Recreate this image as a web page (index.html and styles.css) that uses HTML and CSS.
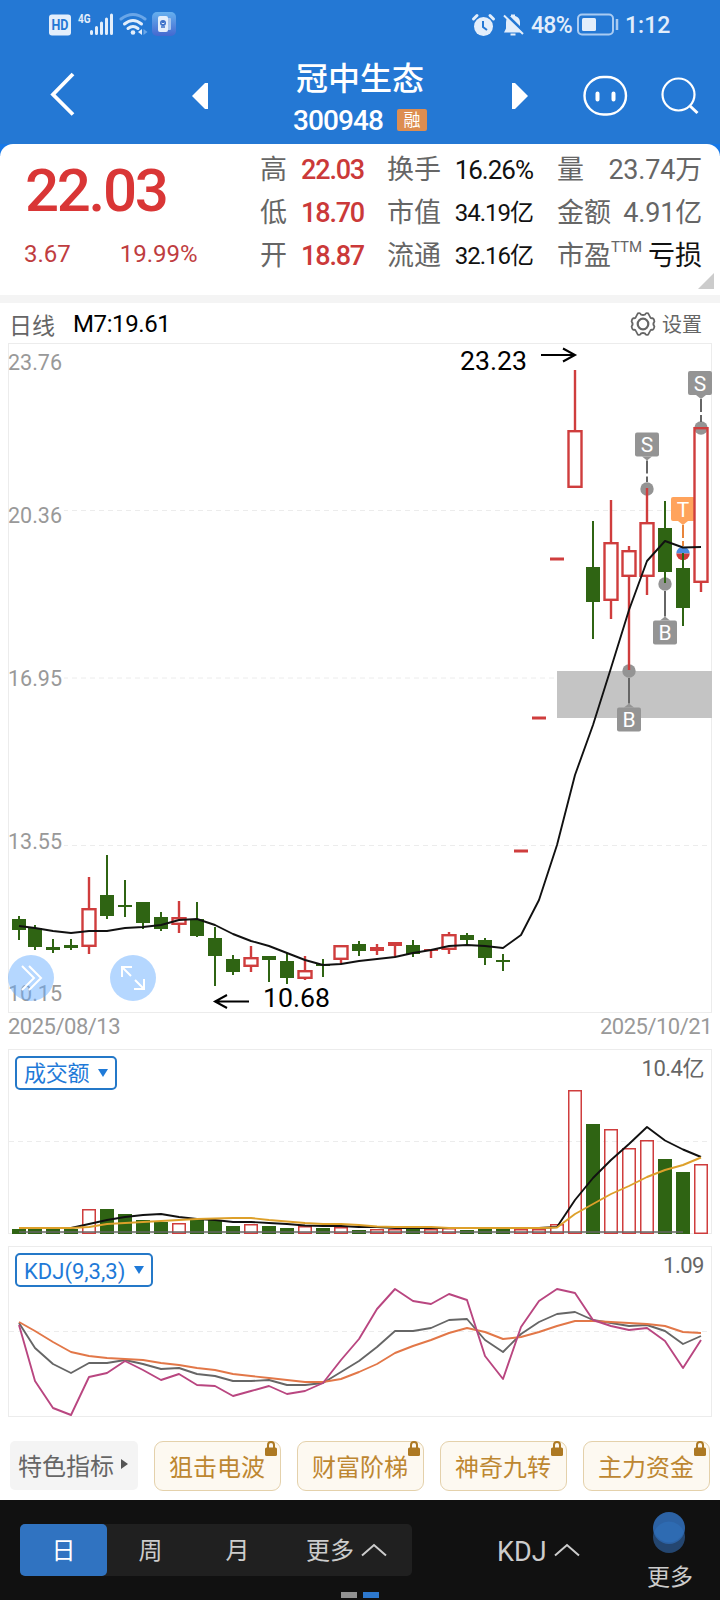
FILE: index.html
```html
<!DOCTYPE html>
<html lang="zh-CN">
<head>
  <meta charset="UTF-8" />
  <meta name="viewport" content="width=device-width, initial-scale=1.0" />
  <title>冠中生态 300948</title>
  <link rel="stylesheet" href="styles.css">
</head>
<body>
  <header class="top">
    <div class="status">
      <svg class="status-left" width="130" height="26" viewBox="48 11 130 26">
        <rect x="49" y="14.500" width="22" height="21" rx="3" fill="#e3eefb" />
        <text x="51.5" y="30" class="hd" textLength="17" lengthAdjust="spacingAndGlyphs">HD</text>
        <text x="78" y="22.500" class="net" textLength="12.500" lengthAdjust="spacingAndGlyphs">4G</text>
        <path d="M91.5 31.5v2M96.5 27.500v6M101.500 23v10.500M106.500 19v14.500M111.500 15v18.500" class="bars" />
        <path d="M121 19Q133 10 145 19" stroke="#6aa6e8" class="wifi" />
        <path d="M124.500 24Q133 17 141.500 24M128 28.500Q133 24.500 138 28.500" stroke="#e3eefb" class="wifi" />
        <circle cx="133" cy="32.500" r="2.300" fill="#e3eefb" />
        <path d="M142 29v6l-4-3z" fill="#e3eefb" />
        <path d="M143.500 29v6l4-3z" fill="#6aa6e8" />
        <defs>
          <linearGradient id="app" x2="0" y2="1"><stop stop-color="#66b0ef" /><stop offset="1" stop-color="#4468cf" /></linearGradient>
        </defs>
        <rect x="152" y="12" width="24" height="24" rx="5" fill="url(#app)" />
        <rect x="162" y="18" width="9" height="12" rx="1" fill="#a5c4ee" />
        <rect x="158" y="16" width="10" height="16" rx="2" fill="#e3eefb" />
        <circle cx="163" cy="23" r="3" fill="#3c70c8" />
        <path d="M161 27h4" stroke="#3c70c8" stroke-width="1.500" />
        <path d="M161.500 23q1.500 1.500 3 0" stroke="#e3eefb" fill="none" />
      </svg>
      <div class="status-right">
        <svg width="54" height="26" viewBox="471 11 54 26">
          <circle cx="483.500" cy="25.500" r="9.500" fill="#e3eefb" />
          <path d="M483 20v6l4 3" stroke="#2478d4" stroke-width="2" fill="none" />
          <path d="M473.500 18l3.500-3.500M493.500 18l-3.500-3.500" stroke="#e3eefb" stroke-width="3" stroke-linecap="round" />
          <path d="M504 31.500h18l-2-4v-6c0-4-2.500-6-5-6.500v-1.500h-4v1.500c-3 .5-5 3-5 6.500v6z" fill="#e3eefb" />
          <path d="M505.500 13l19 18.500" stroke="#2478d4" stroke-width="3" />
          <path d="M504 14.500l19 18.500" stroke="#e3eefb" stroke-width="2" />
          <path d="M510.500 33.500h5" stroke="#e3eefb" stroke-width="2" />
        </svg>
        <span class="pct">48%</span>
        <svg width="42" height="24" viewBox="577 13 42 24">
          <rect x="578" y="14.500" width="35" height="20" rx="4" fill="none" stroke="#a9cbf2" stroke-width="2" />
          <rect x="582" y="18" width="14" height="13" rx="1.500" fill="#e3eefb" />
          <path d="M617 19v11" stroke="#a9cbf2" stroke-width="2.500" />
        </svg>
        <span class="time">1:12</span>
      </div>
    </div>
    <div class="nav">
      <svg class="back" width="30" height="48" viewBox="0 0 30 48"><path d="M26 4L6 24.500l20 20" fill="none" stroke="#fff" stroke-width="3.800" /></svg>
      <svg class="prev" width="16" height="26" viewBox="0 0 16 26"><path d="M16 0v26h-3L0 13 13 0z" fill="#fff" /></svg>
      <div class="stock">
        <h1>冠中生态</h1>
        <p><span class="code">300948</span><span class="badge">融</span></p>
      </div>
      <svg class="next" width="16" height="26" viewBox="0 0 16 26"><path d="M0 0v26h3l13-13L3 0z" fill="#fff" /></svg>
      <svg class="robot" width="46" height="42" viewBox="0 0 46 42" fill="none" stroke="#fff">
        <rect x="1.500" y="2" width="41.500" height="37.500" rx="19" stroke-width="2.400" />
        <path d="M14.500 18.500v6M30.500 18.500v6" stroke-width="4" stroke-linecap="round" />
      </svg>
      <svg class="search" width="38" height="38" viewBox="0 0 38 38" fill="none" stroke="#fff" stroke-width="2.200">
        <circle cx="17.500" cy="17.500" r="16" /><path d="M28.500 28.500l8 7.500" stroke-width="3" />
      </svg>
    </div>
  </header>

  <section class="quote">
    <div class="price">
      <strong>22.03</strong>
      <div class="change"><span>3.67</span><span>19.99%</span></div>
    </div>
    <div class="stats">
      <label>高</label><b class="up">22.03</b>
      <label>换手</label><b class="turn">16.26%</b>
      <label>量</label><b class="vol">23.74万</b>
      <label>低</label><b class="up">18.70</b>
      <label>市值</label><b class="cap">34.19亿</b>
      <label>金额</label><b class="vol">4.91亿</b>
      <label>开</label><b class="up">18.87</b>
      <label>流通</label><b class="cap">32.16亿</b>
      <label>市盈<sup>TTM</sup></label><b class="loss">亏损</b>
    </div>
    <i class="corner"></i>
  </section>

  <section class="charts">
    <div class="chart-head">
      <span class="period">日线</span>
      <span class="ma">M7:19.61</span>
      <svg class="gear" width="26" height="26" viewBox="-13 -13 26 26" fill="none" stroke="#666" stroke-width="1.800">
        <path d="M-5.200-10.600Q-2.500-11.500-2.200-9.500Q0-8.500 2.200-9.500Q2.500-11.500 5.200-10.600L7.200-6.800Q7.500-5.500 9.500-5.800Q11-5.500 11.400-2.500Q9.300 0 11.400 2.500Q11 5.500 9.500 5.800Q7.500 5.500 7.200 6.800L5.200 10.600Q2.500 11.500 2.200 9.500Q0 8.500-2.200 9.500Q-2.500 11.500-5.200 10.600L-7.200 6.800Q-7.500 5.500-9.500 5.800Q-11 5.500-11.400 2.500Q-9.300 0-11.400-2.500Q-11-5.500-9.500-5.800Q-7.500-5.500-7.200-6.800Z" />
        <circle r="5.300" stroke-width="2.200" />
      </svg>
      <span class="setting">设置</span>
    </div>
    <div class="panel">
      <svg id="kline" width="720" height="672" viewBox="0 342 720 672"></svg>
      <div class="round fold">
        <svg width="46" height="46" viewBox="0 0 46 46"><path d="M14 11l12 12-12 12M21 11l12 12-12 12" /></svg>
      </div>
      <div class="round expand">
        <svg width="46" height="46" viewBox="0 0 46 46"><path d="M12 22V12h10M12 12l9 9M34 24v10H24M34 34l-9-9" /></svg>
      </div>
    </div>
    <div class="dates"><span>2025/08/13</span><span>2025/10/21</span></div>
    <div class="panel amount">
      <svg id="volume" width="720" height="187" viewBox="0 1048 720 187"></svg>
      <div class="tag cn">成交额<i></i></div>
      <span class="max">10.4亿</span>
    </div>
    <div class="panel kdj">
      <svg id="kdj" width="720" height="173" viewBox="0 1245 720 173"></svg>
      <div class="tag">KDJ(9,3,3)<i></i></div>
      <span class="max">1.09</span>
    </div>
  </section>

  <div class="chips">
    <div class="chip all">特色指标<i></i></div>
    <div class="chip">狙击电波<svg class="lock" width="12" height="15" viewBox="0 0 12 15"><path d="M3 7V4a3 3 0 0 1 6 0v3" /><rect y="6.500" width="12" height="8.500" rx="1.500" /></svg></div>
    <div class="chip">财富阶梯<svg class="lock" width="12" height="15" viewBox="0 0 12 15"><path d="M3 7V4a3 3 0 0 1 6 0v3" /><rect y="6.500" width="12" height="8.500" rx="1.500" /></svg></div>
    <div class="chip">神奇九转<svg class="lock" width="12" height="15" viewBox="0 0 12 15"><path d="M3 7V4a3 3 0 0 1 6 0v3" /><rect y="6.500" width="12" height="8.500" rx="1.500" /></svg></div>
    <div class="chip">主力资金<svg class="lock" width="12" height="15" viewBox="0 0 12 15"><path d="M3 7V4a3 3 0 0 1 6 0v3" /><rect y="6.500" width="12" height="8.500" rx="1.500" /></svg></div>
  </div>

  <footer class="bottom">
    <div class="tabs">
      <span class="tab on">日</span>
      <span class="tab">周</span>
      <span class="tab">月</span>
      <span class="tab wide">更多<svg width="26" height="14" viewBox="0 0 26 14"><path d="M1 12.500L13 2l12 10.500" /></svg></span>
    </div>
    <div class="indicator">KDJ<svg width="26" height="14" viewBox="0 0 26 14"><path d="M1 12.500L13 2l12 10.500" /></svg></div>
    <div class="more">
      <svg width="34" height="43" viewBox="0 0 34 43">
        <circle cx="17" cy="26" r="16" fill="#244670" />
        <circle cx="17" cy="17" r="16" fill="#2c62a4" />
        <path d="M2 21a16 16 0 0 1 30 0a16 16 0 0 1-30 0z" fill="#2e6bb2" />
      </svg>
      <span>更多</span>
    </div>
    <div class="pager"><i></i><i class="on"></i></div>
  </footer>

  <script src="chart.js"></script>
</body>
</html>
```

FILE: styles.css
```css
* {
  box-sizing: border-box;
}
body {
  margin: 0;
  width: 720px;
  height: 1600px;
  overflow: hidden;
  background: #fff;
  font-family: Roboto, "Noto Sans CJK SC", sans-serif;
}
svg {
  display: block;
  flex: none;
}
h1, p {
  margin: 0;
}

/* header */
.top {
  height: 144px;
  background: #2478d4;
  color: #fff;
}
.status {
  height: 48px;
  padding: 11px 50px 0 48px;
  display: flex;
  justify-content: space-between;
}
.status-right {
  display: flex;
  align-items: center;
  height: 28px;
  color: #e3eefb;
  font-size: 23px;
  font-weight: 500;
}
.pct {
  width: 46px;
  margin-left: 6px;
  letter-spacing: -0.700px;
}
.time {
  margin-left: 6px;
  width: 45px;
  white-space: nowrap;
}
.hd {
  font: bold 14px Roboto;
  fill: #2478d4;
}
.net {
  font: bold 13px Roboto;
  fill: #e3eefb;
}
.bars {
  stroke: #e3eefb;
  stroke-width: 3;
  stroke-linecap: round;
}
.wifi {
  fill: none;
  stroke-width: 3;
  stroke-linecap: round;
}
.nav {
  display: flex;
  height: 96px;
}
.back {
  margin: 22px 0 0 47px;
}
.prev {
  margin: 35px 0 0 115px;
}
.stock {
  margin-left: 72px;
  width: 160px;
}
.stock h1 {
  margin-left: 16px;
  font-size: 32px;
  line-height: 36px;
  margin-top: 13px;
  font-weight: 500;
  white-space: nowrap;
}
.stock p {
  display: flex;
  align-items: center;
  margin: 9px 0 0 13px;
  height: 28px;
}
.code {
  font-size: 28px;
  font-weight: 500;
  width: 104px;
  letter-spacing: -0.900px;
}
.badge {
  width: 30px;
  height: 22px;
  background: #dd8d50;
  border-radius: 2px;
  font-size: 17px;
  line-height: 22px;
  text-align: center;
}
.next {
  margin: 35px 0 0 72px;
}
.robot {
  margin: 27px 0 0 55px;
}
.search {
  margin: 29px 0 0 32px;
}

/* quote */
.quote {
  position: relative;
  display: flex;
  height: 151px;
  background: linear-gradient(#1678e8, #1678e8) top / 100% 12px no-repeat;
}
.quote::before {
  content: "";
  position: absolute;
  inset: 0;
  background: #fff;
  border-radius: 13px 13px 0 0;
}
.price {
  position: relative;
  width: 260px;
  padding-left: 25px;
  color: #d93636;
}
.price strong {
  display: block;
  margin-top: 12px;
  font-size: 60px;
  line-height: 70px;
  font-weight: 500;
  letter-spacing: -2.300px;
}
.change {
  display: flex;
  gap: 49px;
  margin-top: 14px;
  font-size: 24px;
  line-height: 28px;
  color: #bf3d3f;
}
.change span:first-child {
  margin-left: -1px;
}
.stats {
  position: relative;
  display: grid;
  grid-template-columns: 36px 67px 88px 82px 60px 109px;
  grid-template-rows: repeat(3, 43px);
  margin-top: 5px;
  align-items: center;
}
.stats label {
  font-size: 27px;
  line-height: 43px;
  color: #666;
  white-space: nowrap;
}
.stats label:nth-of-type(3n + 2) {
  padding-left: 24px;
}
.stats label:nth-of-type(3n) {
  padding-left: 24px;
}
.stats b {
  justify-self: end;
  font-weight: 400;
  line-height: 43px;
  white-space: nowrap;
}
.stats .up {
  color: #cb3939;
  font-size: 27px;
  font-weight: 500;
  letter-spacing: -1.200px;
  margin-right: -1px;
}
.stats .turn {
  color: #111;
  font-size: 26px;
  letter-spacing: -1px;
}
.stats .cap {
  color: #111;
  font-size: 24px;
  letter-spacing: -1px;
}
.stats .vol {
  color: #666;
  font-size: 27px;
  letter-spacing: -0.200px;
}
.stats .loss {
  color: #111;
  font-size: 27px;
}
.stats sup {
  font-size: 15px;
  line-height: 0;
  vertical-align: 13px;
}
.corner {
  position: absolute;
  right: 6px;
  bottom: 6px;
  border-left: 16px solid transparent;
  border-bottom: 16px solid #ccc;
}

/* charts */
.charts {
  border-top: 8px solid #f4f4f4;
}
.chart-head {
  display: flex;
  align-items: center;
  height: 39px;
  padding: 2px 18px 0 9px;
}
.period {
  font-size: 23px;
  color: #666;
}
.ma {
  margin-left: 18px;
  font-size: 24px;
  color: #000;
  letter-spacing: -0.400px;
}
.gear {
  margin-left: auto;
}
.setting {
  margin-left: 6px;
  font-size: 20px;
  color: #666;
}
.panel {
  position: relative;
}
.frame {
  fill: none;
  stroke: #ececec;
}
.grid {
  stroke: #ececec;
  stroke-dasharray: 5 4;
}
.line {
  fill: none;
  stroke-width: 1.900;
  stroke-linejoin: round;
}
.axis {
  font-size: 22px;
  fill: #999;
}
.mark {
  font-size: 26px;
  fill: #000;
}
.arrow {
  fill: none;
  stroke: #000;
  stroke-width: 2;
}
.flag {
  font-size: 21px;
  fill: #fff;
  text-anchor: middle;
}
.round {
  position: absolute;
  top: 613px;
  width: 46px;
  height: 46px;
  border-radius: 50%;
  background: rgba(100, 172, 255, 0.480);
}
.round path {
  fill: none;
  stroke: #fff;
  stroke-width: 2;
}
.fold {
  left: 8px;
}
.expand {
  left: 110px;
}
.dates {
  display: flex;
  justify-content: space-between;
  height: 34px;
  padding: 0 8px 0 8px;
  font-size: 22px;
  line-height: 25px;
  letter-spacing: -0.500px;
  color: #999;
}
.kdj {
  margin-top: 10px;
}
.tag {
  position: absolute;
  left: 15px;
  top: 8px;
  height: 34px;
  padding: 0 7px;
  border: 2px solid #2478c8;
  border-radius: 5px;
  color: #1f7ad8;
  font-size: 22px;
  line-height: 33px;
  white-space: nowrap;
  display: flex;
}
.tag i {
  margin: 11px 0 0 9px;
  border: 5px solid transparent;
  border-top: 8px solid #1f7ad8;
  border-bottom: 0;
  height: 0;
}
.cn {
  line-height: 32px;
  letter-spacing: -0.200px;
}
.max {
  position: absolute;
  right: 16px;
  top: 7px;
  font-size: 22px;
  line-height: 28px;
  letter-spacing: -0.500px;
  color: #666;
}

/* indicator chips */
.chips {
  display: flex;
  gap: 16px;
  height: 82px;
  padding: 23px 10px 0;
}
.chip {
  position: relative;
  width: 127px;
  height: 50px;
  border: 1px solid #e4d1ab;
  border-radius: 9px;
  background: #fdf9f1;
  color: #bd8731;
  font-size: 24px;
  line-height: 52px;
  padding-left: 14px;
  white-space: nowrap;
}
.all {
  display: flex;
  width: 128px;
  height: 49px;
  padding-left: 8px;
  border: 0;
  border-radius: 5px;
  background: #f4f4f4;
  color: #666;
}
.all i {
  height: 0;
  margin: 18px 0 0 7px;
  border: 5px solid transparent;
  border-left: 7px solid #555;
  border-right: 0;
}
.lock {
  position: absolute;
  right: 3px;
  top: -1px;
  fill: #ad7923;
}
.lock path {
  fill: none;
  stroke: #ad7923;
  stroke-width: 2;
}

/* bottom bar */
.bottom {
  position: relative;
  display: flex;
  height: 100px;
  background: #111;
  color: #ccc;
  font-size: 24px;
}
.bottom path {
  stroke-width: 2;
}
.tabs {
  display: flex;
  margin: 24px 0 0 20px;
  width: 392px;
  height: 52px;
  border-radius: 5px;
  background: #202020;
}
.tab {
  width: 87px;
  height: 52px;
  line-height: 54px;
  text-align: center;
}
.tab.on {
  background: #3073c1;
  color: #fff;
  border-radius: 5px;
}
.wide {
  width: 131px;
  display: flex;
  padding-left: 25px;
}
.wide svg, .indicator svg {
  margin: 19px 0 0 7px;
  fill: none;
  stroke: #ccc;
}
.indicator {
  display: flex;
  margin: 24px 0 0 85px;
  font-size: 27px;
  line-height: 56px;
}
.more {
  position: absolute;
  left: 640px;
  top: 11px;
  width: 60px;
}
.more svg {
  margin-left: 12px;
}
.more span {
  display: block;
  margin-top: 8px;
  line-height: 32px;
  font-size: 23px;
  text-align: center;
}
.pager {
  position: absolute;
  left: 341px;
  bottom: 2px;
  display: flex;
  gap: 6px;
}
.pager i {
  width: 16px;
  height: 6px;
  background: #929292;
}
.pager .on {
  background: #2d78ce;
}
```

FILE: chart.js
```js
const RED = "#cf3d3d";
const GREEN = "#2f6413";

// x of each trading day
const xs = [19];
for (let i = 0; i < 38; i++) xs.push(35 + i * 18);

// [colour, high, body top, body bottom, low]
const candles = [
  ["g", 916, 919, 930, 940], ["g", 925, 928, 947, 950], ["g", 939, 947, 950, 953],
  ["g", 939, 945, 948, 950], ["r", 877, 908, 947, 954], ["g", 855, 895, 916, 919],
  ["g", 880, 905, 907, 917], ["g", 902, 902, 923, 929], ["g", 912, 917, 929, 931],
  ["r", 901, 917, 925, 933], ["g", 902, 919, 936, 937], ["g", 927, 938, 956, 986],
  ["g", 955, 959, 972, 975], ["r", 946, 957, 967, 972], ["g", 956, 956, 960, 982],
  ["g", 953, 961, 978, 984], ["r", 956, 970, 979, 980], ["g", 959, 964, 966, 977],
  ["r", 945, 945, 960, 964], ["g", 941, 944, 951, 956], ["r", 944, 947, 951, 955],
  ["r", 942, 942, 946, 957], ["g", 940, 945, 954, 957], ["r", 949, 949, 951, 958],
  ["r", 932, 934, 950, 954], ["g", 933, 935, 940, 944], ["g", 938, 940, 958, 965],
  ["g", 954, 960, 962, 971], ["r", 849.5, 849.5, 852.5, 852.5], ["r", 716.5, 716.5, 719.5, 719.5],
  ["r", 557.5, 557.5, 560.5, 560.5], ["r", 370, 430, 488, 488], ["g", 521, 567, 602, 639],
  ["r", 500, 542, 601, 619], ["r", 546, 550, 577, 670], ["r", 488, 522, 577, 595],
  ["g", 501, 528, 572, 583], ["g", 553, 568, 608, 626], ["r", 427, 427, 583, 592]
];
const ma7 = [926, 928, 931, 933, 931, 931, 928, 927, 925, 920, 919, 925, 934, 941, 946, 953, 960, 965, 964, 961,
  959, 957, 953, 950, 946, 945, 946, 948, 935, 900, 845, 775, 725, 668, 610, 561, 541, 547.5, 547];

const volTop = [1229, 1229, 1229, 1229, 1209, 1209, 1214, 1220, 1222, 1223, 1220, 1220, 1226, 1224, 1226, 1228, 1226,
  1228, 1227, 1230, 1229, 1229, 1229, 1229, 1228, 1230, 1229, 1229, 1229, 1229, 1224, 1090, 1124, 1129, 1148, 1140,
  1159, 1172, 1164];
const vol5 = [1228, 1228, 1228, 1228, 1224, 1220, 1217, 1215, 1214, 1217, 1219, 1220, 1222, 1222, 1223, 1224, 1225.5,
  1226, 1226, 1227, 1227, 1228, 1228, 1228, 1228, 1228, 1228, 1228, 1228, 1228, 1227, 1200, 1178, 1160, 1144, 1127,
  1140.5, 1149.5, 1157];
const vol10 = [1228, 1228, 1228, 1228, 1227, 1224, 1223, 1222, 1221, 1220, 1219, 1218.5, 1218, 1218, 1220, 1221.5,
  1223, 1224, 1224, 1225, 1226.5, 1227, 1227, 1227, 1228, 1228, 1228, 1228, 1228, 1228, 1227.5, 1214, 1204, 1194, 1186,
  1177, 1170, 1165, 1157.5];

const k = [1323, 1348, 1364, 1373, 1363, 1363, 1360, 1364, 1369, 1368, 1374, 1376, 1381, 1381, 1380, 1385, 1385, 1383,
  1372, 1361, 1347, 1331, 1331, 1328, 1320, 1319, 1340, 1352, 1334, 1322, 1314, 1312, 1320, 1323, 1326, 1325, 1331,
  1344, 1336];
const d = [1322, 1331, 1342, 1352, 1356, 1358, 1359, 1360, 1363, 1365, 1368, 1370, 1374, 1376, 1378, 1380, 1382, 1382,
  1379, 1372, 1364, 1353, 1346, 1340, 1333, 1328, 1332, 1339, 1337, 1332, 1326, 1321, 1321, 1322, 1323, 1324, 1326,
  1332, 1333];
const j = [1325, 1381, 1408, 1415, 1377, 1373, 1361, 1370, 1380, 1374, 1385, 1386, 1396, 1391, 1386, 1394, 1391, 1383,
  1360, 1339, 1309, 1289, 1301, 1304, 1294, 1300, 1356, 1379, 1327, 1301, 1289, 1293, 1320, 1326, 1330, 1328, 1341,
  1368, 1340];

const line = (data, color) =>
  `<polyline class="line" stroke="${color}" points="${data.map((y, i) => xs[i] + "," + y).join(" ")}" />`;
const rect = (x, y, w, h, color) => `<rect x="${x}" y="${y}" width="${w}" height="${h}" fill="${color}" />`;
const box = (x, y, w, h, s) =>
  `<rect x="${x + s / 2}" y="${y + s / 2}" width="${w - s}" height="${h - s}" fill="none" stroke="${RED}" stroke-width="${s}" />`;
const frame = (top, bottom) => `<rect class="frame" x="8.5" y="${top}" width="703" height="${bottom - top}" />`;
const grid = y => `<path class="grid" d="M9 ${y}H711" />`;
const label = (cls, x, y, w, text) =>
  `<text class="${cls}" x="${x}" y="${y}" textLength="${w}" lengthAdjust="spacingAndGlyphs">${text}</text>`;

function candle([c, high, top, bottom, low], i) {
  const x = xs[i];
  const color = c === "r" ? RED : GREEN;
  const w = c === "r" ? 2.4 : 2;
  let out = "";
  if (top > high) out += rect(x - w / 2, high, w, top - high, color);
  if (low > bottom) out += rect(x - w / 2, bottom, w, low - bottom, color);
  if (c === "r" && bottom - top > 5) return out + box(x - 7.7, top, 15.4, bottom - top, 2.4);
  return out + rect(x - 7, top, 14, bottom - top, color);
}

// buy / sell flag, tip points at the dot
function flag(x, top, dot, text, color) {
  const up = dot < top;
  const tip = up ? top - 4 : top + 28;
  const base = up ? top : top + 24;
  const end = up ? dot + 7 : dot;
  return `<path d="M${x - 5} ${base}L${x} ${tip}L${x + 5} ${base}z" fill="${color}" />
    <path d="M${x} ${tip}V${end}" stroke="${text === "T" ? "#e8853c" : "#666"}" stroke-width="2" ${up ? "" : 'stroke-dasharray="13 3"'} />
    <rect x="${Math.min(x - 12, 688)}" y="${top}" width="24" height="24" rx="2" fill="${color}" />
    <text class="flag" x="${Math.min(x, 700)}" y="${top + 19.5}">${text}</text>`;
}
const dot = (x, y) => `<circle cx="${x}" cy="${y}" r="6.700" fill="#949494" />`;

document.getElementById("kline").innerHTML =
  frame(343.5, 1012.5) + grid(510.5) + grid(678) + grid(845.5) +
  rect(557, 671, 155, 47, "#c4c4c4") +
  `<g fill="#fff"><rect x="9" y="500" width="55" height="26" /><rect x="9" y="665" width="55" height="26" /><rect x="9" y="830" width="55" height="26" /></g>` +
  label("axis", 8, 370, 54, "23.76") + label("axis", 8, 523, 54, "20.36") +
  label("axis", 8, 686, 54, "16.95") + label("axis", 8, 849, 54, "13.55") + label("axis", 8, 1001, 54, "10.15") +
  dot(701, 428) + dot(647, 489) + dot(665, 584) + dot(629, 671) +
  flag(683, 497, 546, "T", "#ffa35c") +
  `<path d="M676.300 553.500a6.700 6.700 0 0 1 13.400 0z" fill="#4c8ae0" /><path d="M676.300 553.500a6.700 6.700 0 0 0 13.400 0z" fill="#d03838" />` +
  rect(695, 428, 12, 154, "#fff") +
  `<path d="M694.300 428a6.700 6.700 0 0 0 13.400 0z" fill="#949494" />` +
  candles.map(candle).join("") +
  line(ma7, "#111") +
  flag(701, 371, 422, "S", "#949494") + flag(647, 432.5, 482, "S", "#949494") +
  flag(665, 620.5, 584, "B", "#949494") + flag(629, 707.5, 671, "B", "#949494") +
  label("mark", 460, 370, 67, "23.23") + label("mark", 263, 1007, 67, "10.68") +
  `<path class="arrow" d="M541 355H574M563 348.500L575 355L563 361.500" />
   <path class="arrow" d="M249 1001.500H216M227 995L215 1001.500L227 1008" />`;

document.getElementById("volume").innerHTML =
  frame(1049.5, 1233.5) + grid(1141.5) +
  volTop.map((y, i) => candles[i][0] === "r"
    ? box(xs[i] - 7, y, 14, 1234 - y, 1.5)
    : rect(xs[i] - 7, y, 14, 1234 - y, GREEN)).join("") +
  `<path d="M19 1232H683" stroke="#666" stroke-width="1.500" />` +
  line(vol5, "#111") + line(vol10, "#dda02a");

document.getElementById("kdj").innerHTML =
  frame(1246.5, 1416.5) + grid(1331.5) + line(k, "#666") + line(d, "#e27748") + line(j, "#b94680");
```
